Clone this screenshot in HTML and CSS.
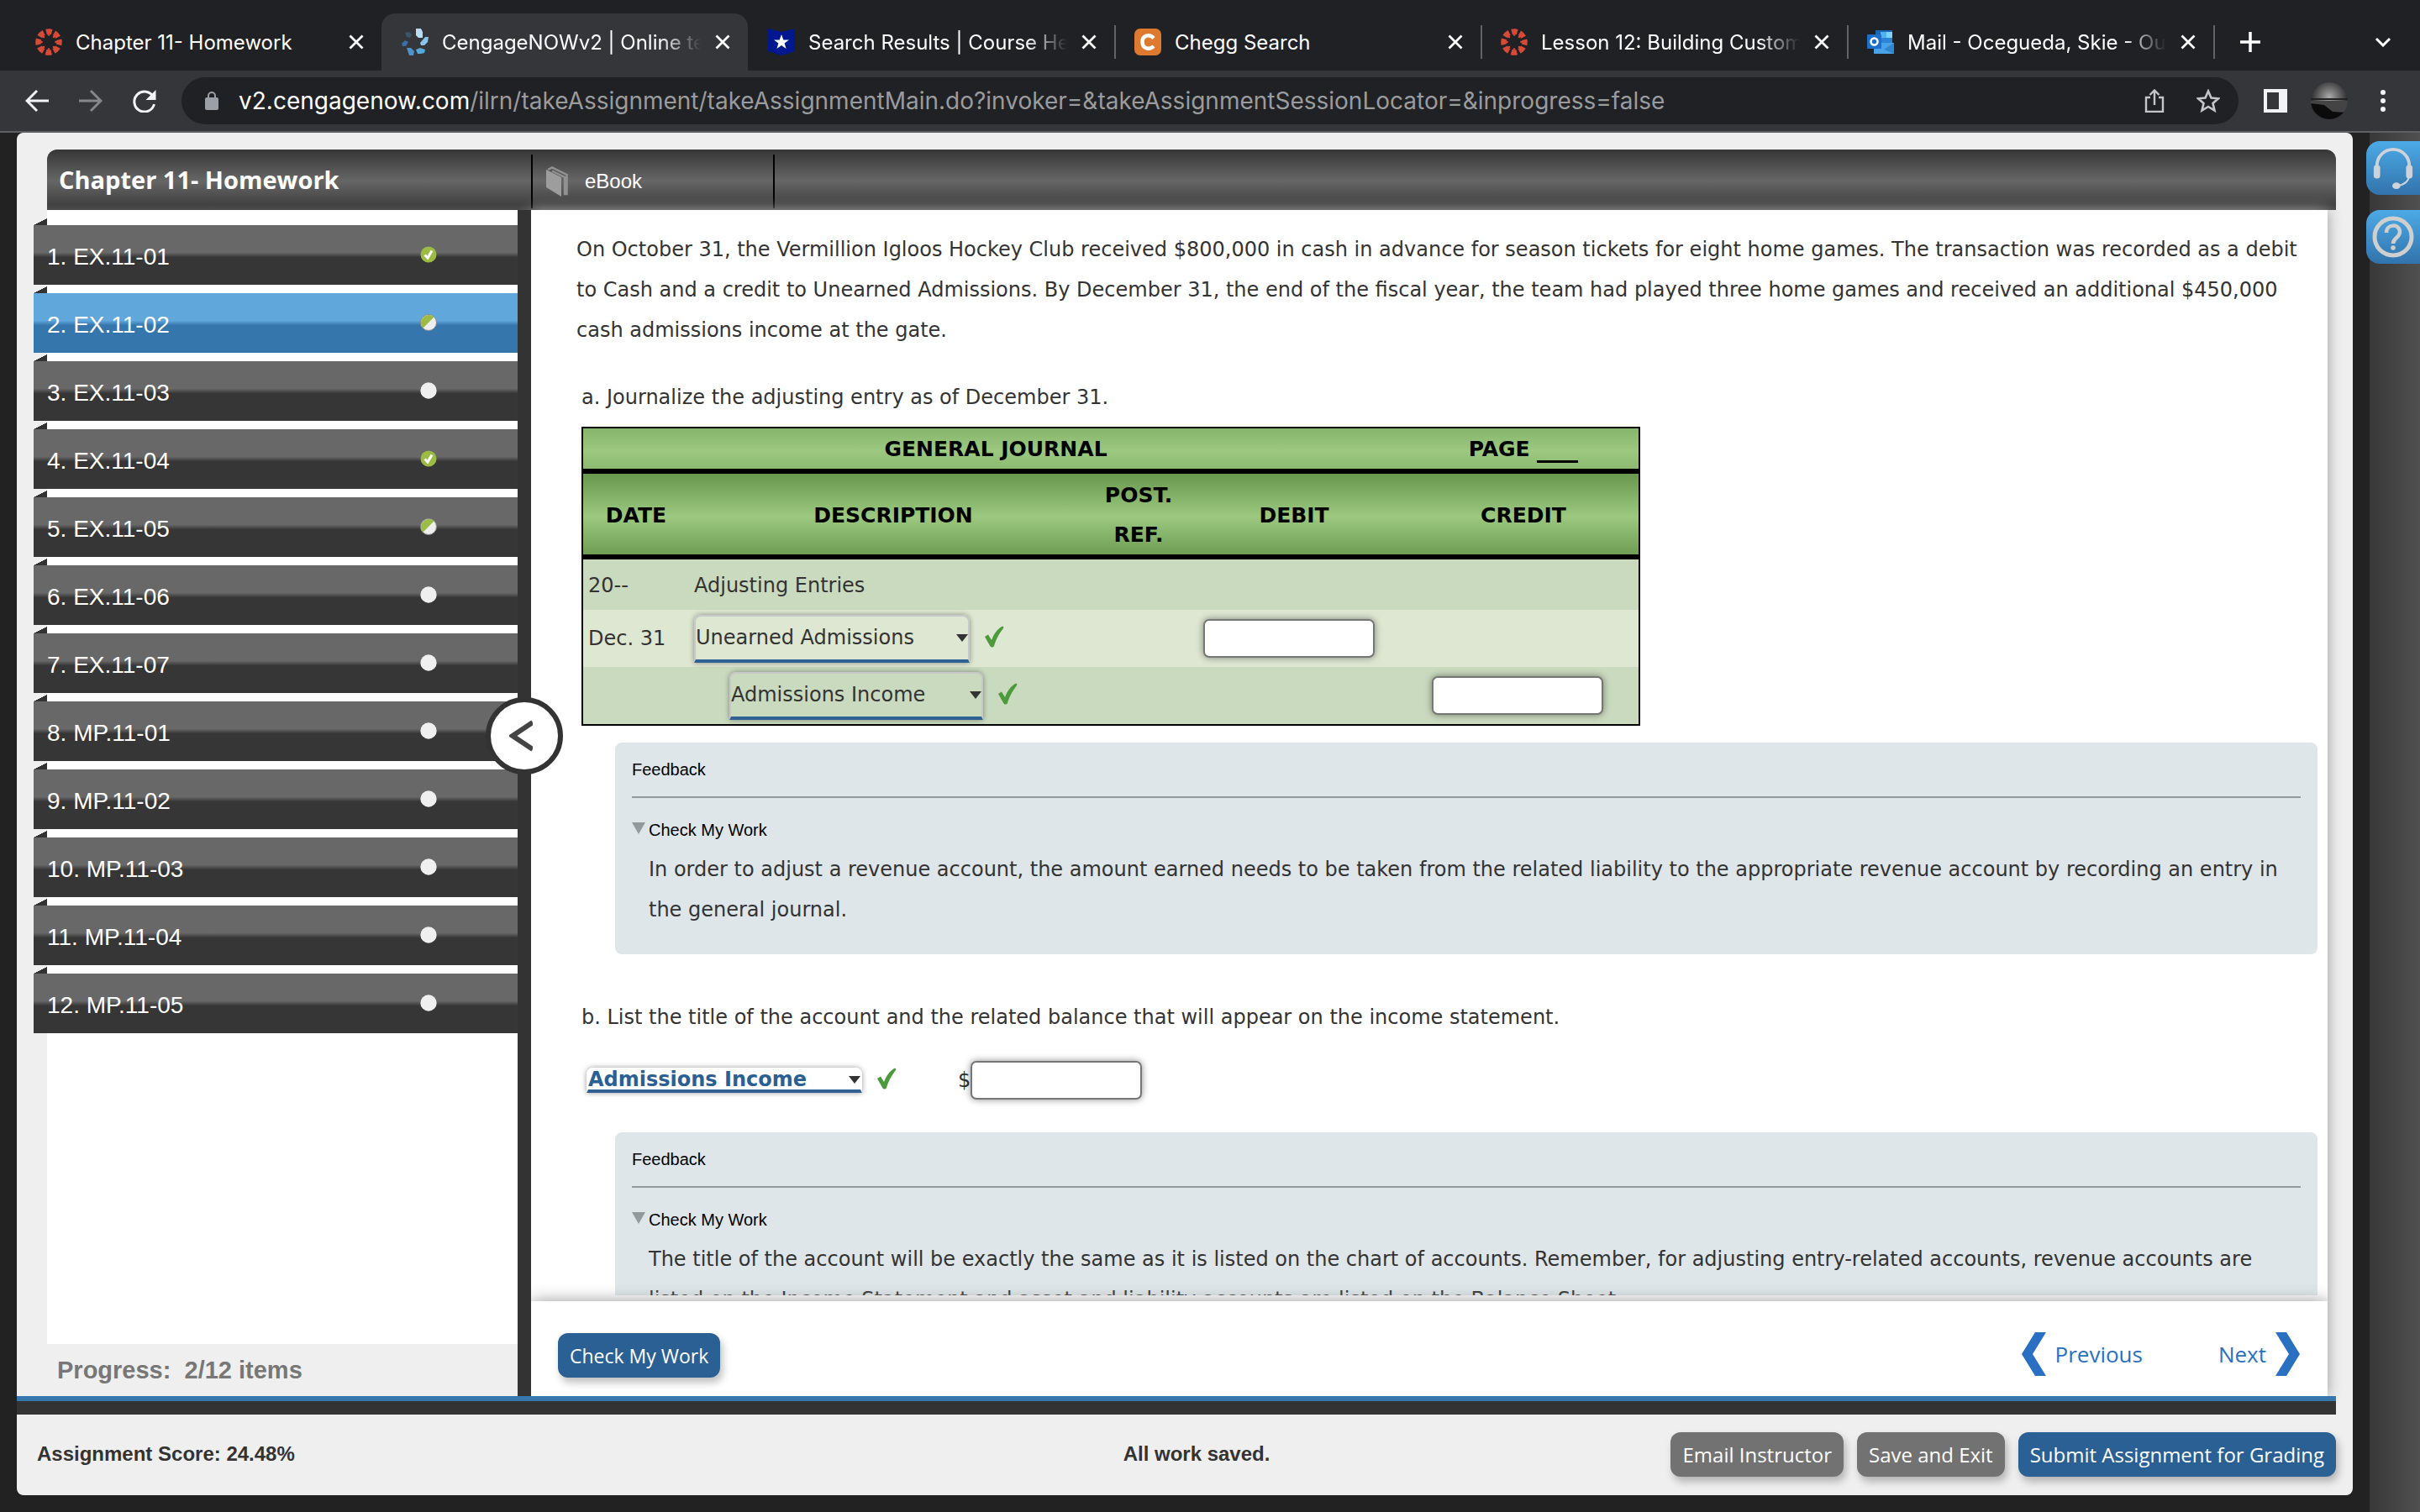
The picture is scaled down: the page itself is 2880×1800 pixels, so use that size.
FILE: index.html
```html
<!DOCTYPE html>
<html lang="en">
<head>
<meta charset="utf-8">
<title>CengageNOWv2 | Online teaching and learning</title>
<link rel="stylesheet" href="styles.css">
</head>
<body>
<svg class="defs" aria-hidden="true">
  <symbol id="canvas" viewBox="0 0 32 32">
    <circle cx="16" cy="16" r="12.5" fill="none" stroke="#d64a36" stroke-width="6.5" stroke-dasharray="6.8 3.017" stroke-dashoffset="3.4"/>
    <g fill="#d64a36"><circle cx="16" cy="7.5" r="1.3"/><circle cx="22" cy="10" r="1.3"/><circle cx="24.5" cy="16" r="1.3"/><circle cx="22" cy="22" r="1.3"/><circle cx="16" cy="24.5" r="1.3"/><circle cx="10" cy="22" r="1.3"/><circle cx="7.5" cy="16" r="1.3"/><circle cx="10" cy="10" r="1.3"/></g>
  </symbol>
  <symbol id="cross" viewBox="0 0 20 20"><path d="M2.500 2.500 17.500 17.500M17.500 2.500 2.500 17.500" stroke="#fff" stroke-width="2.800" fill="none"/></symbol>
  <symbol id="tick" viewBox="0 0 24 26"><path d="M1 13 5 10.500 9 17C12 9 16 4 21 1 23 0 24 1.500 23 3 17 11 14 17 12 24 11 26 8.500 26 7.500 24.500z" fill="#4c9a3c"/></symbol>
  <symbol id="done" viewBox="0 0 20 20"><circle cx="10" cy="10" r="9.500" fill="#9bbb45"/><path d="M5.500 10.500 9 14 14 5.500" stroke="#fff" stroke-width="3" fill="none"/></symbol>
  <symbol id="half" viewBox="0 0 20 20"><circle cx="10" cy="10" r="9.500" fill="#eee" stroke="#888"/><path d="M3.300 16.700A9.500 9.500 0 0 1 16.700 3.300z" fill="#9bbb45"/></symbol>
  <symbol id="open" viewBox="0 0 20 20"><circle cx="10" cy="10" r="9.700" fill="#efefef"/></symbol>
</svg>

<nav class="tabs" aria-label="Browser tabs">
  <div class="tab"><svg class="fav"><use href="#canvas"/></svg><span class="tab-title">Chapter 11- Homework</span><button class="close" aria-label="Close tab"><svg><use href="#cross"/></svg></button></div>
  <div class="tab active"><svg class="fav" viewBox="0 0 32 32"><path d="M17 0h6l2 4v7h-5l-3-3z" fill="#b9dcf3"/><path d="M28 10h4l-1 6-4 4h-4l-1-3z" fill="#8cc4e8"/><path d="M17 25l5-2 6 2-1 4-4 1h-4z" fill="#55a8dc"/><path d="M6 23h5l4 4-1 5H9z" fill="#4b93c8"/><path d="M0 18l4-4 4 2-3 5H1z" fill="#3a6ea5"/><path d="M4 5l5-1 3 3-2 4-4-1z" fill="#3d526b"/></svg><span class="tab-title fade">CengageNOWv2 | Online teaching</span><button class="close" aria-label="Close tab"><svg><use href="#cross"/></svg></button></div>
  <div class="tab"><svg class="fav" viewBox="0 0 32 32"><path d="M0 0 16 4 32 0V27L16 32 0 27z" fill="#00188f"/><path d="M16 7l2.300 6.500H25l-5.400 4 2 6.500-5.600-4-5.600 4 2-6.500-5.400-4h6.700z" fill="#fff"/></svg><span class="tab-title fade">Search Results | Course Hero</span><button class="close" aria-label="Close tab"><svg><use href="#cross"/></svg></button></div>
  <div class="tab sep"><svg class="fav" viewBox="0 0 32 32"><rect width="32" height="32" rx="7" fill="#dd7a30"/><path d="M23 11.500C18 6 9.500 8 9.500 16S18 26 23 21" stroke="#fff" stroke-width="4.500" fill="none"/></svg><span class="tab-title">Chegg Search</span><button class="close" aria-label="Close tab"><svg><use href="#cross"/></svg></button></div>
  <div class="tab sep"><svg class="fav"><use href="#canvas"/></svg><span class="tab-title fade">Lesson 12: Building Customer</span><button class="close" aria-label="Close tab"><svg><use href="#cross"/></svg></button></div>
  <div class="tab sep"><svg class="fav" viewBox="0 0 32 32"><path d="M10 2h20v18H10z" fill="#1d65b5"/><path d="M16 4h14v7H16z" fill="#4fb3ef"/><path d="M23 4h7v7h-7z" fill="#7fd3fb"/><path d="M16 11h14v7H16z" fill="#2b84d6"/><path d="M8 17h24v13H8z" fill="#4aa3e6"/><path d="M32 17 20 25l12 5z" fill="#2f86d0"/><rect y="7" width="17" height="17" rx="1" fill="#1e6fc9"/><circle cx="8.500" cy="15.500" r="4" fill="none" stroke="#fff" stroke-width="2.500"/></svg><span class="tab-title fade">Mail - Ocegueda, Skie - Outlook</span><button class="close" aria-label="Close tab"><svg><use href="#cross"/></svg></button></div>
  <button class="new-tab sep" aria-label="New tab"><svg viewBox="0 0 24 24"><path d="M12 0v24M0 12h24" stroke="#fff" stroke-width="3.500"/></svg></button>
  <button class="tab-list" aria-label="Search tabs"><svg viewBox="0 0 20 12"><path d="M2 2l8 8 8-8" stroke="#fff" stroke-width="3" fill="none"/></svg></button>
</nav>

<div class="toolbar">
  <button class="tool" aria-label="Back"><svg viewBox="0 0 28 28"><path d="M28 14H3M14 2 2 14l12 12" stroke="#f1f3f4" stroke-width="3" fill="none"/></svg></button>
  <button class="tool" aria-label="Forward"><svg viewBox="0 0 28 28"><path d="M0 14h25M14 2l12 12-12 12" stroke="#85878a" stroke-width="3" fill="none"/></svg></button>
  <button class="tool" aria-label="Reload"><svg viewBox="0 0 28 28"><path d="M24.500 9.500A12 12 0 1 0 25.500 18" stroke="#f1f3f4" stroke-width="3" fill="none"/><path d="M27.500 1v12h-12z" fill="#f1f3f4"/></svg></button>
  <div class="address">
    <svg class="lock" viewBox="0 0 16 22"><rect y="7" width="16" height="15" rx="2" fill="#9aa0a6"/><path d="M4 8V5a4 4 0 0 1 8 0v3" stroke="#9aa0a6" stroke-width="2" fill="none"/></svg>
    <span class="url"><b>v2.cengagenow.com</b>/ilrn/takeAssignment/takeAssignmentMain.do?invoker=&amp;takeAssignmentSessionLocator=&amp;inprogress=false</span>
    <button class="tool" aria-label="Share"><svg viewBox="0 0 28 28"><path d="M9 10H4v17h20V10h-5M14 19V2M8.500 7 14 1.500 19.500 7" stroke="#c4c7ca" stroke-width="2.400" fill="none"/></svg></button>
    <button class="tool" aria-label="Bookmark"><svg viewBox="0 0 28 28"><path d="M14 2.500l3.500 8 8.500.8-6.500 5.700 2 8.500L14 21l-7.500 4.500 2-8.500L2 11.300l8.500-.8z" stroke="#c4c7ca" stroke-width="2.600" fill="none"/></svg></button>
  </div>
  <button class="tool panel" aria-label="Side panel"><svg viewBox="0 0 28 28"><path d="M0 0h28v28H0zM4 4v20h14V4z" fill="#f1f3f4" fill-rule="evenodd"/></svg></button>
  <button class="tool avatar" aria-label="Profile"><svg viewBox="0 0 44 44"><defs><clipPath id="round"><circle cx="22" cy="22" r="22"/></clipPath><radialGradient id="sky" cx=".5" cy=".4" r=".5"><stop stop-color="#aaa"/><stop offset="1" stop-color="#2c2c2c"/></radialGradient></defs><g clip-path="url(#round)"><path d="M0 0h44v44H0z" fill="url(#sky)"/><path d="M0 19h44v2H0z" fill="#222"/><path d="M0 22h44v22H0z" fill="#444"/><path d="M0 25l16 2 10 8 18 1v8H0z" fill="#0b0b0b"/></g></svg></button>
  <button class="tool" aria-label="Menu"><svg viewBox="0 0 28 28"><g fill="#f1f3f4"><circle cx="14" cy="4" r="3"/><circle cx="14" cy="14" r="3"/><circle cx="14" cy="24" r="3"/></g></svg></button>
</div>

<div class="page">
  <div class="app">
    <header class="app-head">
      <h1>Chapter 11- Homework</h1>
      <a class="ebook" href="#"><svg viewBox="0 0 26 36"><path d="M0 4 18 13V36L0 25z" fill="#9d9d9d"/><path d="M2 4 7 1.500 24.500 10V33H22V13L7 5.500" stroke="#919191" stroke-width="2.500" fill="none"/></svg>eBook</a>
    </header>

    <div class="work">
      <aside class="side">
        <ul class="items">
          <li><a href="#">1. EX.11-01<svg><use href="#done"/></svg></a></li>
          <li><a class="current" href="#">2. EX.11-02<svg><use href="#half"/></svg></a></li>
          <li><a href="#">3. EX.11-03<svg><use href="#open"/></svg></a></li>
          <li><a href="#">4. EX.11-04<svg><use href="#done"/></svg></a></li>
          <li><a href="#">5. EX.11-05<svg><use href="#half"/></svg></a></li>
          <li><a href="#">6. EX.11-06<svg><use href="#open"/></svg></a></li>
          <li><a href="#">7. EX.11-07<svg><use href="#open"/></svg></a></li>
          <li><a href="#">8. MP.11-01<svg><use href="#open"/></svg></a></li>
          <li><a href="#">9. MP.11-02<svg><use href="#open"/></svg></a></li>
          <li><a href="#">10. MP.11-03<svg><use href="#open"/></svg></a></li>
          <li><a href="#">11. MP.11-04<svg><use href="#open"/></svg></a></li>
          <li><a href="#">12. MP.11-05<svg><use href="#open"/></svg></a></li>
        </ul>
        <p class="progress">Progress:&nbsp; 2/12 items</p>
      </aside>
      <div class="divider"><button class="collapse" aria-label="Collapse list"><svg viewBox="0 0 28 38"><path d="M28 3 4 19l24 16" stroke="#444" stroke-width="6" fill="none"/></svg></button></div>

      <main class="main">
        <div class="scroll">
          <p class="intro">On October 31, the Vermillion Igloos Hockey Club received $800,000 in cash in advance for season tickets for eight home games. The transaction was recorded as a debit to Cash and a credit to Unearned Admissions. By December 31, the end of the fiscal year, the team had played three home games and received an additional $450,000 cash admissions income at the gate.</p>
          <p class="part">a. Journalize the adjusting entry as of December 31.</p>
          <table class="journal">
            <colgroup><col class="c-date"><col class="c-desc"><col class="c-post"><col class="c-debit"><col class="c-credit"></colgroup>
            <thead>
              <tr class="title"><th colspan="4">GENERAL JOURNAL</th><th>PAGE <span class="blank"></span></th></tr>
              <tr class="heads"><th>DATE</th><th>DESCRIPTION</th><th>POST.<br>REF.</th><th>DEBIT</th><th>CREDIT</th></tr>
            </thead>
            <tbody>
              <tr class="short"><td>20--</td><td>Adjusting Entries</td><td></td><td></td><td></td></tr>
              <tr class="light"><td>Dec. 31</td><td><div class="pick"><select class="account wide" aria-label="Debit account"><option>Unearned Admissions</option></select><svg class="tick"><use href="#tick"/></svg></div></td><td></td><td class="sum"><input class="amount" type="text" aria-label="Debit amount"></td><td></td></tr>
              <tr><td></td><td class="indent"><div class="pick"><select class="account" aria-label="Credit account"><option>Admissions Income</option></select><svg class="tick"><use href="#tick"/></svg></div></td><td></td><td></td><td class="sum"><input class="amount" type="text" aria-label="Credit amount"></td></tr>
            </tbody>
          </table>
          <section class="feedback">
            <h2>Feedback</h2>
            <details open><summary>Check My Work</summary><p>In order to adjust a revenue account, the amount earned needs to be taken from the related liability to the appropriate revenue account by recording an entry in the general journal.</p></details>
          </section>
          <p class="part second">b. List the title of the account and the related balance that will appear on the income statement.</p>
          <div class="answer">
            <div class="pick"><select class="account wide slim" aria-label="Account title"><option>Admissions Income</option></select><svg class="tick"><use href="#tick"/></svg></div>
            <label class="dollar">$<input class="amount" type="text"></label>
          </div>
          <section class="feedback last">
            <h2>Feedback</h2>
            <details open><summary>Check My Work</summary><p>The title of the account will be exactly the same as it is listed on the chart of accounts. Remember, for adjusting entry-related accounts, revenue accounts are listed on the Income Statement and asset and liability accounts are listed on the Balance Sheet.</p></details>
          </section>
        </div>
        <div class="pager">
          <button class="btn primary">Check My Work</button>
          <a class="step" href="#"><svg viewBox="0 0 29 52"><path d="M16 0h13L13 26l16 26H16L0 26z" fill="#2a70c2"/></svg>Previous</a>
          <a class="step" href="#">Next<svg viewBox="0 0 29 52"><path d="M13 0H0l16 26L0 52h13l16-26z" fill="#2a70c2"/></svg></a>
        </div>
      </main>
    </div>

    <div class="rule"></div>
    <footer class="foot">
      <strong>Assignment Score: 24.48%</strong>
      <strong class="saved">All work saved.</strong>
      <div class="actions"><button class="btn">Email Instructor</button><button class="btn">Save and Exit</button><button class="btn primary">Submit Assignment for Grading</button></div>
    </footer>
  </div>

  <div class="rail">
    <button class="help" aria-label="Support"><svg viewBox="0 0 50 54"><path d="M5 31V24a20 20 0 0 1 40 0v7" stroke="#cdd3d8" stroke-width="4" fill="none"/><path d="M45 36c-1 9-7 12-15 13" stroke="#cdd3d8" stroke-width="2" fill="none"/><rect x="1" y="23" width="8" height="17" rx="4" fill="#cdd3d8"/><rect x="41" y="23" width="8" height="17" rx="4" fill="#cdd3d8"/><ellipse cx="29" cy="49" rx="5" ry="4" fill="#cdd3d8"/></svg></button>
    <button class="help" aria-label="Help"><svg viewBox="0 0 50 50"><circle cx="25" cy="25" r="22" stroke="#cfcfcf" stroke-width="5" fill="none"/><path d="M17 20c0-11 16-11 16-1 0 7-8 7-8 14" stroke="#cfcfcf" stroke-width="4.500" fill="none"/><circle cx="25" cy="38" r="2.800" fill="#cfcfcf"/></svg></button>
  </div>
</div>
</body>
</html>
```
FILE: styles.css
```css
* { box-sizing: border-box; }
body {
  margin: 0;
  height: 100vh;
  display: flex;
  flex-direction: column;
  overflow: hidden;
  background: #222;
  color: #333;
  font-family: "Liberation Sans", Arial, sans-serif;
  font-size: 24px;
}
h1, h2, p, ul { margin: 0; padding: 0; font-weight: normal; }
button { border: 0; padding: 0; background: none; font: inherit; color: inherit; }
a { text-decoration: none; color: inherit; }
svg { display: block; flex: none; }
.defs { width: 0; height: 0; position: absolute; }

/* Browser chrome */
.tabs {
  flex: none;
  display: flex;
  height: 84px;
  padding: 16px 16px 0 18px;
  background: #202124;
  color: #fff;
  font-family: Inter, Roboto, sans-serif;
}
.tab {
  flex: 0 1 436px;
  min-width: 0;
  display: flex;
  align-items: center;
  gap: 16px;
  padding: 0 20px 0 24px;
}
.tab.active { background: #35363a; border-radius: 16px 16px 0 0; }
.sep { background: linear-gradient(#5f6368, #5f6368) left center / 2px 40px no-repeat; }
.fav { width: 32px; height: 32px; }
.tab-title { flex: 1; overflow: hidden; white-space: nowrap; }
.fade { mask-image: linear-gradient(to right, #000 84%, transparent); }
.close svg { width: 20px; height: 20px; }
.new-tab { width: 88px; display: grid; place-items: center; }
.new-tab svg { width: 24px; height: 24px; }
.tab-list { margin-left: auto; width: 56px; display: grid; place-items: center; }
.tab-list svg { width: 20px; height: 12px; }

.toolbar {
  flex: none;
  display: flex;
  align-items: center;
  height: 74px;
  padding: 0 12px;
  background: #35363a;
  border-bottom: 2px solid #5f6063;
}
.tool { width: 64px; height: 56px; display: grid; place-items: center; }
.tool svg { width: 28px; height: 28px; }
.panel { margin-left: 12px; }
.avatar svg { width: 44px; height: 44px; }
.address {
  flex: 1;
  display: flex;
  align-items: center;
  height: 56px;
  margin-left: 12px;
  padding: 0 4px 0 28px;
  border-radius: 28px;
  background: #202124;
}
.lock { width: 16px; height: 22px; }
.url { flex: 1; margin-left: 24px; font: 28px Inter, Roboto, sans-serif; color: #9a9b9d; }
.url b { font-weight: normal; color: #fff; }

/* Page frame */
.page { flex: 1; min-height: 0; display: flex; padding-left: 20px; }
.app {
  flex: 1;
  min-width: 0;
  display: flex;
  flex-direction: column;
  margin: 0 20px 20px 0;
  border-radius: 8px;
  background: #efefef;
}
.rail {
  width: 60px;
  display: flex;
  flex-direction: column;
  gap: 18px;
  padding-top: 10px;
  background: linear-gradient(to right, #383838, #505050);
}
.help {
  width: 64px;
  height: 64px;
  margin-left: -4px;
  padding: 0 0 0 7px;
  border-radius: 16px 0 0 16px;
  background: linear-gradient(#4caae6, #3273ac);
}
.help svg { width: 50px; height: 52px; }

.app-head {
  flex: none;
  display: flex;
  height: 72px;
  margin: 20px 20px 0 36px;
  border-radius: 12px 12px 0 0;
  background: linear-gradient(#363636, #666 52%, #424242 90%, #4a4a4a);
  color: #fff;
}
.app-head h1 {
  width: 576px;
  padding-left: 14px;
  font: bold 29px/72px "Open Sans", sans-serif;
}
.ebook {
  width: 290px;
  display: flex;
  align-items: center;
  gap: 20px;
  margin: 6px 0 2px;
  padding-left: 16px;
  border: solid #000;
  border-width: 0 2px;
}
.ebook svg { width: 26px; height: 36px; }

.work { flex: 1; min-height: 0; display: flex; }
.side { width: 596px; padding-left: 36px; display: flex; flex-direction: column; }
.items {
  flex: 1;
  display: flex;
  flex-direction: column;
  gap: 2px;
  padding-top: 10px;
  background: #fff;
  list-style: none;
}
/* The folded corner sits above each bar, left of the white panel. */
.items li { margin-left: -16px; }
.items li::before {
  content: "";
  display: block;
  width: 16px;
  height: 8px;
  background: linear-gradient(to bottom right, #efefef 50%, #333 50%);
}
.items a {
  display: flex;
  align-items: center;
  justify-content: space-between;
  height: 71px;
  padding: 4px 96px 0 16px;
  background: linear-gradient(#686868 46%, #363636 54%);
  color: #fff;
  font-size: 28px;
}
.items a.current { background: linear-gradient(#60a7dc 46%, #3576ac 54%); }
.items svg { width: 20px; height: 20px; margin-bottom: 6px; }
.progress { height: 62px; padding-left: 12px; font-size: 29px; line-height: 62px; font-weight: bold; color: #777; }

.divider { width: 16px; z-index: 1; background: #333; display: flex; align-items: center; justify-content: center; padding-bottom: 160px; }
.collapse {
  flex: none;
  width: 92px;
  height: 92px;
  display: grid;
  place-items: center;
  border: 6px solid #333;
  border-radius: 50%;
  background: #fff;
}
.collapse svg { width: 28px; height: 38px; margin-right: 8px; }

/* Question */
.main {
  flex: 1;
  min-width: 0;
  display: flex;
  flex-direction: column;
  margin-right: 30px;
  background: #fff;
  box-shadow: 0 0 16px #999;
  font: 24px/48px "DejaVu Sans", Verdana, sans-serif;
}
.scroll {
  flex: 1;
  min-height: 0;
  overflow: auto;
  scrollbar-width: none;
  margin-bottom: 7px;
  padding: 23px 12px 0 54px;
}
.part { margin: 32px 0 11px 6px; }
.part.second { margin: 51px 0 28px 6px; }

.journal {
  width: 1260px;
  margin-left: 6px;
  table-layout: fixed;
  border-collapse: separate;
  border-spacing: 0;
  border: 2px solid #000;
}
.c-date { width: 126px; }
.c-desc { width: 486px; }
.c-post { width: 98px; }
.c-debit { width: 272px; }
.journal th { padding: 2px 0 0; color: #000; font-size: 25px; border-bottom: 6px solid #000; }
.title { background: linear-gradient(#86b56c, #9cc97f 50%, #86b56c); }
.title th { height: 54px; line-height: 46px; }
.heads { background: linear-gradient(#68974e, #9cc97f 50%, #68974e); }
.heads th { height: 102px; line-height: 47px; }
.blank { display: inline-block; width: 49px; height: 26px; border-bottom: 3px solid #000; vertical-align: -8px; }
.journal td { height: 68px; padding: 0 6px; background: #cadabf; }
.journal .short td { height: 60px; padding-top: 2px; }
.journal .light td { background: #dee7d2; }
.journal .indent { padding-left: 48px; }
.journal .sum { padding-left: 28px; }

.pick { display: flex; align-items: center; gap: 17px; }
.account {
  appearance: none;
  width: 302px;
  height: 57px;
  padding: 0;
  border: 2px solid #c8c8c8;
  border-bottom: 4px solid #2f6193;
  border-radius: 8px 8px 0 0;
  background: url("data:image/svg+xml,%3Csvg xmlns='http://www.w3.org/2000/svg' width='14' height='9'%3E%3Cpath d='M0 0h14L7 9z' fill='%23333'/%3E%3C/svg%3E") right center no-repeat;
  box-shadow: 0 0 6px rgba(0, 0, 0, .4);
  color: #333;
  font: inherit;
}
.wide { width: 328px; }
.slim { height: 30px; border-color: #fff; border-bottom-color: #2f6193; line-height: 24px; font-weight: bold; color: #2a6094; }
.tick { width: 24px; height: 26px; margin-bottom: 4px; }
.amount {
  display: block;
  width: 204px;
  height: 46px;
  padding: 0 8px;
  border: 2px solid #767676;
  border-radius: 7px;
  background: #fff;
  box-shadow: 0 0 8px rgba(0, 0, 0, .45);
  font: inherit;
}
.answer { display: flex; align-items: center; gap: 73px; height: 46px; margin-left: 12px; }
.dollar { display: flex; align-items: center; }

.feedback { margin: 20px 0 0 46px; padding: 0 20px 29px; border-radius: 8px; background: #dee6e9; }
.feedback.last { margin-top: 39px; }
.feedback h2 { border-bottom: 2px solid #94999c; color: #000; font: 20px/64px "Liberation Sans", Arial, sans-serif; }
.feedback summary {
  display: flex;
  gap: 3px;
  padding: 26px 0 11px;
  color: #000;
  font: 20px/24px "Liberation Sans", Arial, sans-serif;
}
.feedback summary::before {
  content: "";
  margin: 3px 1px 0 0;
  border: solid transparent;
  border-width: 14px 8px 0;
  border-top-color: #94999c;
}
.feedback p { padding-left: 20px; }

.pager {
  flex: none;
  display: flex;
  align-items: center;
  gap: 90px;
  height: 113px;
  padding: 16px 33px 0 32px;
  background: #fff;
  box-shadow: 0 0 18px #999;
  clip-path: inset(-20px 0 0 0);
}
.pager .btn { margin-right: auto; font-size: 23px; }
.step { display: flex; align-items: center; gap: 11px; padding-bottom: 3px; color: #2a70c2; font: 26px "Open Sans", sans-serif; }
.step svg { width: 29px; height: 52px; }
.btn {
  height: 53px;
  padding: 0 14px;
  border-radius: 12px;
  background: #727272;
  box-shadow: 3px 6px 10px rgba(0, 0, 0, .25);
  color: #fff;
  font: 24px "Open Sans", sans-serif;
}
.primary { background: #2a6094; }

.rule { flex: none; height: 22px; margin-right: 20px; border-top: 6px solid #3678ae; background: #333; z-index: 1; }
.foot {
  flex: none;
  display: grid;
  grid-template-columns: 1fr auto 1fr;
  align-items: center;
  height: 96px;
  padding: 0 20px 2px 24px;
}
.saved { padding-left: 24px; }
.actions { display: flex; justify-content: flex-end; gap: 16px; }
```
